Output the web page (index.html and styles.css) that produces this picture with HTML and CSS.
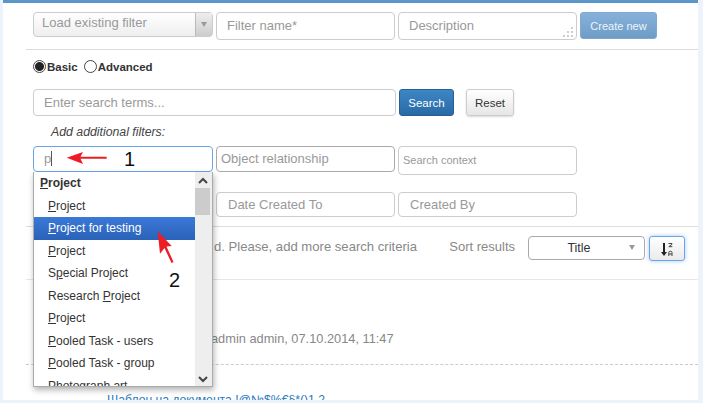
FILE: index.html
```html
<!DOCTYPE html>
<html lang="en">
<head>
    <meta charset="UTF-8">
    <title>Search</title>
    <link rel="stylesheet" href="styles.css">
</head>
<body>
    <div class="page">
        <div class="filter-row">
            <div class="combo">
                <span class="combo-text">Load existing filter</span>
                <span class="combo-btn"><span class="caret"></span></span>
            </div>
            <div class="field tall">Filter name*</div>
            <div class="field tall desc">Description
                <svg class="grip" width="12" height="12" viewBox="0 0 12 12">
                    <path d="M8 1h2v2H8zM8 5h2v2H8zM4 5h2v2H4zM8 9h2v2H8zM4 9h2v2H4zM0 9h2v2H0z" fill="#ccc"/>
                </svg>
            </div>
            <button class="btn-create">Create new</button>
        </div>

        <div class="mode-row">
            <label class="mode"><span class="radio on"></span>Basic</label>
            <label class="mode"><span class="radio"></span>Advanced</label>
        </div>

        <div class="search-row">
            <div class="field search-input">Enter search terms...</div>
            <button class="btn-search">Search</button>
            <button class="btn-reset">Reset</button>
        </div>

        <p class="add-label">Add additional filters:</p>

        <div class="grid-row first">
            <div class="field active"><span class="typed">p</span></div>
            <div class="field relation">Object relationship</div>
            <div class="field context">Search context</div>
        </div>
        <div class="grid-row second">
            <div class="field wide"></div>
            <div class="field pad">Date Created To</div>
            <div class="field pad">Created By</div>
        </div>

        <div class="sort-row">
            <span class="no-results">d. Please, add more search criteria</span>
            <span class="sort-label">Sort results</span>
            <div class="sort-select">Title<span class="caret"></span></div>
            <button class="sort-btn">
                <svg width="18" height="16" viewBox="0 0 18 16">
                    <path d="M5 2h2v9h2L6 15 3 11h2z" fill="#222"/>
                    <path d="M10.500 2.500h3.500v.8l-3.200 2.400h3.500M10.800 15v-3.500q0-1.300 1.600-1.300t1.600 1.300V15M10.800 13h3.200" fill="none" stroke="#444" stroke-width="1"/>
                </svg>
            </button>
        </div>

        <div class="result">
            <p class="result-meta">admin admin, 07.10.2014, 11:47</p>
        </div>
        <div class="result-next">
            <a class="result-link">Шаблон на документа !@№$%€§*()1.2</a>
        </div>

        <!-- autocomplete list, open over the filters -->
        <div class="suggest">
            <ul class="suggest-list">
                <li class="group"><u>P</u>roject</li>
                <li><u>P</u>roject</li>
                <li class="selected"><u>P</u>roject for testing</li>
                <li><u>P</u>roject</li>
                <li>S<u>p</u>ecial Project</li>
                <li>Research <u>P</u>roject</li>
                <li><u>P</u>roject</li>
                <li><u>P</u>ooled Task - users</li>
                <li><u>P</u>ooled Task - group</li>
                <li><u>P</u>hotograph art</li>
            </ul>
            <div class="scroll">
                <svg class="chev" width="12" height="8" viewBox="0 0 12 8"><path d="M2 6l4-4 4 4" fill="none" stroke="#444" stroke-width="2"/></svg>
                <div class="thumb"></div>
                <svg class="chev down" width="12" height="8" viewBox="0 0 12 8"><path d="M2 2l4 4 4-4" fill="none" stroke="#444" stroke-width="2"/></svg>
            </div>
        </div>

        <!-- hand drawn notes on the screenshot -->
        <svg class="notes" width="703" height="403" viewBox="0 0 703 403">
            <path d="M66.700 157.700L83 152l-2.500 4.700h26.200v2H80.500L83 164z" fill="#ee1c25"/>
            <path d="M157.700 231.300L171.700 246l-5.200.5 7 15.500-2 1-7-15-4.500 5.700z" fill="#ee1c25"/>
        </svg>
        <span class="note one">1</span>
        <span class="note two">2</span>
    </div>
</body>
</html>
```

FILE: styles.css
```css
* {
    box-sizing: border-box;
}
html, body {
    margin: 0;
    height: 100%;
    overflow: hidden;
}
body {
    background-color: #edf3fb;
    font-family: "Liberation Sans", Arial, sans-serif;
    font-size: 13px;
    color: #999;
}
.page {
    position: relative;
    width: 695px;
    height: 397px;
    margin-left: 3px;
    box-sizing: content-box;
    background-color: #fff;
    border-top: 3px solid #5a96c8;
    overflow: hidden;
}
svg {
    display: block;
}

/* Filter row */
.filter-row {
    display: flex;
    align-items: flex-start;
    gap: 3px;
    height: 47px;
    margin-left: 23px;
    padding: 9px 0 0 7px;
    border-bottom: 1px solid #ddd;
}
.combo {
    display: flex;
    width: 180px;
    height: 25px;
    border: 1px solid #ccc;
    border-radius: 4px;
    background: linear-gradient(#fff, #eee);
}
.combo-text {
    flex: 1;
    padding: 2px 8px;
}
.combo-btn {
    display: flex;
    align-items: center;
    justify-content: center;
    width: 17px;
    border-left: 1px solid #bbb;
    background: linear-gradient(#eee, #ccc);
}
.caret {
    width: 0;
    height: 0;
    border-left: 3px solid transparent;
    border-right: 3px solid transparent;
    border-top: 5px solid #999;
}
.field {
    width: 179px;
    height: 25px;
    padding: 4px 10px;
    border: 1px solid #ccc;
    border-radius: 4px;
    background-color: #fff;
}
.tall {
    height: 28px;
    padding-top: 5px;
}
.desc {
    position: relative;
}
.grip {
    position: absolute;
    right: 1px;
    bottom: 1px;
}
.btn-create {
    width: 77px;
    height: 27px;
    border: 1px solid #7fa9d0;
    border-radius: 3px;
    background: linear-gradient(#86b1da, #6f9cc6);
    color: #eef4fa;
    font: 11px "Liberation Sans", Arial, sans-serif;
}

/* Basic / Advanced */
.mode-row {
    display: flex;
    gap: 6px;
    padding: 9px 0 0 30px;
    height: 39px;
}
.mode {
    display: flex;
    align-items: center;
    height: 15px;
    font-size: 11.500px;
    font-weight: bold;
    color: #333;
}
.radio {
    width: 13px;
    height: 13px;
    margin-right: 1px;
    border: 1px solid #444;
    border-radius: 50%;
    background-color: #fff;
}
.radio.on {
    background: radial-gradient(circle, #222 0 4px, #fff 5px);
}

/* Search */
.search-row {
    display: flex;
    padding-left: 30px;
    height: 27px;
}
.search-input {
    width: 363px;
    height: 27px;
    margin-right: 3px;
    padding-top: 5px;
}
.btn-search {
    width: 55px;
    height: 27px;
    margin-right: 12px;
    border: 1px solid #255f95;
    border-radius: 3px;
    background: linear-gradient(#3c87c6, #2a6aa4);
    color: #fff;
    font: 11.500px "Liberation Sans", Arial, sans-serif;
}
.btn-reset {
    width: 48px;
    height: 27px;
    border: 1px solid #ccc;
    border-radius: 3px;
    background: linear-gradient(#fff, #e6e6e6);
    box-shadow: 0 1px 2px rgba(0, 0, 0, 0.15);
    color: #333;
    font: 11.500px "Liberation Sans", Arial, sans-serif;
}
.add-label {
    margin: 9px 0 0 48px;
    height: 21px;
    font-size: 12.300px;
    font-style: italic;
    color: #444;
}

/* Additional filters */
.grid-row {
    display: flex;
    gap: 3px;
    padding-left: 30px;
}
.first {
    height: 46px;
}
.second {
    height: 34px;
}
.wide,
.active {
    width: 180px;
}
.active {
    height: 26px;
    border-color: #69a5e8;
}
.typed {
    border-right: 1px solid #555;
}
.relation {
    height: 26px;
    padding-left: 4px;
    border-color: #aaa;
}
.context {
    height: 29px;
    padding: 7px 4px;
    font-size: 11px;
}
.pad {
    padding-left: 11px;
}

/* Sort */
.sort-row {
    display: flex;
    align-items: flex-start;
    height: 54px;
    margin-left: 23px;
    padding: 9px 13px 0 188px;
    border-top: 1px solid #ddd;
    border-bottom: 1px solid #e6e6e6;
}
.no-results {
    padding-top: 3px;
    font-size: 13.100px;
    color: #888;
    white-space: nowrap;
}
.sort-label {
    margin-left: auto;
    margin-right: 13px;
    padding-top: 3px;
    color: #888;
}
.sort-select {
    position: relative;
    width: 117px;
    height: 24px;
    margin-right: 4px;
    padding: 4px 15px 0 0;
    border: 1px solid #aaa;
    border-radius: 4px;
    text-align: center;
    font-size: 12.500px;
    color: #333;
}
.sort-select .caret {
    position: absolute;
    right: 9px;
    top: 8px;
}
.sort-btn {
    display: flex;
    align-items: center;
    justify-content: center;
    width: 36px;
    height: 25px;
    padding: 0;
    border: 1px solid #69a5e8;
    border-radius: 3px;
    background: linear-gradient(#fff, #eaeaea);
    box-shadow: 0 0 4px rgba(80, 150, 230, 0.5);
}

/* Results */
.result {
    height: 85px;
    margin-left: 23px;
    padding: 51px 0 0 185px;
    border-bottom: 1px dashed #ccc;
}
.result-meta {
    margin: 0;
    font-size: 12.800px;
    color: #888;
    white-space: nowrap;
}
.result-next {
    padding: 27px 0 0 104px;
}
.result-link {
    font-size: 12.200px;
    color: #2a7ac0;
    text-decoration: underline;
}

/* Autocomplete */
.suggest {
    position: absolute;
    left: 30px;
    top: 169px;
    display: flex;
    width: 180px;
    height: 215px;
    border: 1px solid #aaa;
    border-top: 0;
    background-color: #fff;
    box-shadow: 1px 3px 6px rgba(0, 0, 0, 0.3);
    overflow: hidden;
}
.suggest-list {
    flex: 1;
    margin: 0;
    padding: 0;
    list-style: none;
    font-size: 12px;
    color: #333;
}
.suggest-list li {
    height: 22.500px;
    padding: 4px 0 0 14px;
    white-space: nowrap;
}
.suggest-list .group {
    padding-left: 6px;
    font-weight: bold;
}
.suggest-list .selected {
    background: linear-gradient(#3b78d8, #2a62b8);
    color: #fff;
}
.scroll {
    position: relative;
    width: 17px;
    background-color: #eee;
}
.chev {
    margin: 5px 0 0 2px;
}
.thumb {
    width: 15px;
    height: 27px;
    margin-top: 3px;
    background-color: #ccc;
}
.chev.down {
    position: absolute;
    left: 0;
    bottom: 3px;
}

/* Notes */
.notes {
    position: absolute;
    left: -3px;
    top: -3px;
    pointer-events: none;
}
.note {
    position: absolute;
    font-size: 20px;
    line-height: 20px;
    color: #111;
}
.one {
    left: 121px;
    top: 146px;
}
.two {
    left: 166px;
    top: 267px;
}
```
